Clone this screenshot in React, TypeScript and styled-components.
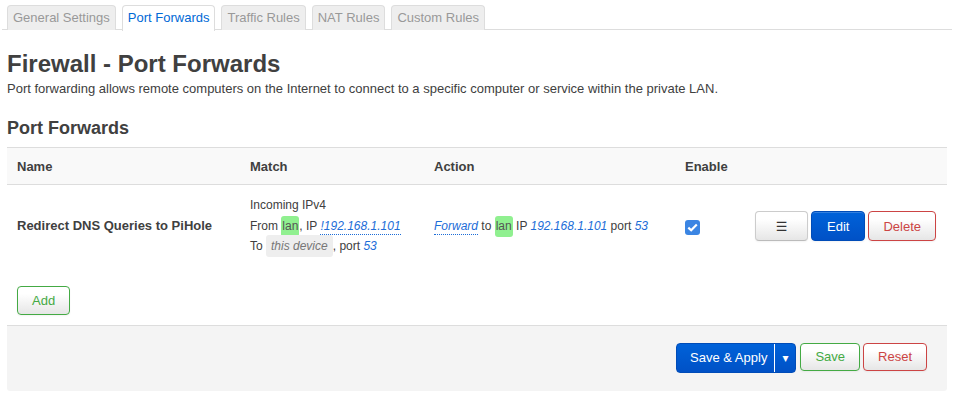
import React from 'react';
import styled, { createGlobalStyle, css } from 'styled-components';

const GlobalStyle = createGlobalStyle`
  html, body {
    margin: 0;
    padding: 0;
    background: #fff;
  }
  body {
    font-family: "Liberation Sans", Arial, Helvetica, sans-serif;
    font-size: 13px;
    color: #404040;
  }
`;

const Page = styled.div`
  width: 950px;
  margin: 5px 0 0 2px;
`;

const TabBar = styled.ul`
  display: flex;
  list-style: none;
  margin: 0;
  padding: 0 0 0 5px;
  border-bottom: 1px solid #ddd;
  height: 24px;
`;

const Tab = styled.li<{ $active?: boolean }>`
  height: 24px;
  line-height: 24px;
  padding: 0 5px;
  margin-right: 6px;
  border: 1px solid #ddd;
  border-bottom: none;
  border-radius: 4px 4px 0 0;
  background: #eee;
  color: #999;
  font-size: 13px;
  ${(p) =>
    p.$active &&
    css`
      background: #fff;
      color: #0069d6;
      height: 25px;
    `}
`;

const Content = styled.div`
  padding: 0 5px;
`;

const Title = styled.h2`
  margin: 19px 0 0;
  font-size: 24px;
  line-height: 30px;
  font-weight: bold;
  color: #404040;
`;

const Description = styled.p`
  margin: 1px 0 0;
  font-size: 13px;
  line-height: 18px;
`;

const SectionTitle = styled.h3`
  margin: 18px 0 0;
  font-size: 18px;
  line-height: 24px;
  font-weight: bold;
  color: #404040;
`;

const Table = styled.table`
  margin-top: 7px;
  width: 940px;
  border-collapse: collapse;
  table-layout: fixed;
`;

const HeadRow = styled.tr`
  background: #f9f9f9;
  border-top: 1px solid #ddd;
  border-bottom: 1px solid #ddd;
  height: 37px;
`;

const HeadCell = styled.th`
  text-align: left;
  font-weight: bold;
  font-size: 13px;
  padding: 0 10px;
`;

const Cell = styled.td<{ $align?: 'left' | 'right'; $small?: boolean }>`
  padding: 10px 10px 8px;
  vertical-align: middle;
  text-align: ${(p) => p.$align || 'left'};
  font-size: ${(p) => (p.$small ? '12px' : '13px')};
  line-height: 20.5px;
`;

const RuleName = styled.strong`
  font-weight: bold;
`;

const Line = styled.div``;

const Zone = styled.span`
  background: #90f090;
  border-radius: 3px;
  padding: 3px 1px 4px;
  color: #555;
`;

const Device = styled.span`
  background: #eee;
  border-radius: 3px;
  padding: 4px 5px;
  color: #777;
  font-style: italic;
`;

const Value = styled.em<{ $dotted?: boolean }>`
  color: #1c6dd8;
  font-style: italic;
  ${(p) =>
    p.$dotted &&
    css`
      border-bottom: 1px dotted #1c6dd8;
      padding-bottom: 1px;
    `}
`;

const Check = styled.span`
  display: inline-flex;
  align-items: center;
  justify-content: center;
  width: 15px;
  height: 15px;
  margin-top: 2px;
  border-radius: 3px;
  background: #3b85e3;
  vertical-align: middle;
`;

const ButtonGroup = styled.div`
  display: flex;
  justify-content: flex-end;
  gap: 3px;
  padding-right: 1px;
  margin-top: 1px;
`;

type Variant = 'neutral' | 'action' | 'positive' | 'negative';

const variantStyles: Record<Variant, ReturnType<typeof css>> = {
  neutral: css`
    color: #333;
    border-color: #ccc #ccc #bbb;
  `,
  action: css`
    color: #fff;
    background: linear-gradient(#0062d9, #0051c6);
    border-color: #004cb8;
    padding: 0 15px;
  `,
  positive: css`
    color: #44aa44;
    border-color: #44aa44;
  `,
  negative: css`
    color: #cc4444;
    border-color: #cc4444;
  `,
};

const Button = styled.button<{ $variant?: Variant; $height?: number; $width?: number }>`
  font-family: "Liberation Sans", Arial, sans-serif;
  font-size: 13px;
  height: ${(p) => p.$height || 30}px;
  ${(p) => p.$width && `width: ${p.$width}px;`}
  padding: 0 14px;
  border: 1px solid #ccc;
  border-radius: 4px;
  background: linear-gradient(#fff, #fff 25%, #e6e6e6);
  box-shadow: inset 0 1px 0 rgba(255, 255, 255, 0.2), 0 1px 2px rgba(0, 0, 0, 0.05);
  cursor: pointer;
  ${(p) => variantStyles[p.$variant || 'neutral']}
`;

const MenuGlyph = styled.span`
  font-family: "DejaVu Sans", sans-serif;
  font-size: 13px;
`;

const AddArea = styled.div`
  padding: 21px 10px 10px;
`;

const Footer = styled.div`
  display: flex;
  justify-content: flex-end;
  gap: 3px;
  background: #f4f4f4;
  border-top: 1px solid #ddd;
  border-radius: 0 0 3px 3px;
  padding: 17px 20px 18px;
`;

const SplitButton = styled.div`
  display: flex;
  height: 28px;
  border: 1px solid #004cb8;
  border-radius: 4px;
  background: linear-gradient(#0062d9, #0051c6);
  overflow: hidden;
  margin-right: 1px;
`;

const SplitMain = styled.span`
  display: flex;
  align-items: center;
  padding: 0 7px 0 13px;
  color: #fff;
  font-size: 13px;
  border-right: 1px solid #fff;
`;

const SplitArrow = styled.span`
  display: flex;
  align-items: center;
  justify-content: center;
  width: 20px;
  color: #fff;
  font-family: "DejaVu Sans", sans-serif;
  font-size: 12px;
`;

const tabs = ['General Settings', 'Port Forwards', 'Traffic Rules', 'NAT Rules', 'Custom Rules'];

export default function App() {
  return (
    <>
      <GlobalStyle />
      <Page>
        <TabBar>
          {tabs.map((t) => (
            <Tab key={t} $active={t === 'Port Forwards'}>
              {t}
            </Tab>
          ))}
        </TabBar>
        <Content>
          <Title>Firewall - Port Forwards</Title>
          <Description>
            Port forwarding allows remote computers on the Internet to connect to a specific computer or service
            within the private LAN.
          </Description>
          <SectionTitle>Port Forwards</SectionTitle>
          <Table>
            <colgroup>
              <col style={{ width: 233 }} />
              <col style={{ width: 184 }} />
              <col style={{ width: 251 }} />
              <col style={{ width: 70 }} />
              <col style={{ width: 202 }} />
            </colgroup>
            <thead>
              <HeadRow>
                <HeadCell>Name</HeadCell>
                <HeadCell>Match</HeadCell>
                <HeadCell>Action</HeadCell>
                <HeadCell>Enable</HeadCell>
                <HeadCell />
              </HeadRow>
            </thead>
            <tbody>
              <tr>
                <Cell>
                  <RuleName>Redirect DNS Queries to PiHole</RuleName>
                </Cell>
                <Cell $small>
                  <Line>Incoming IPv4</Line>
                  <Line>
                    From <Zone>lan</Zone>, IP <Value $dotted>!192.168.1.101</Value>
                  </Line>
                  <Line>
                    To <Device>this device</Device>, port <Value>53</Value>
                  </Line>
                </Cell>
                <Cell $small>
                  <Value $dotted>Forward</Value> to <Zone>lan</Zone> IP <Value>192.168.1.101</Value> port{' '}
                  <Value>53</Value>
                </Cell>
                <Cell>
                  <Check>
                    <svg width="11" height="9" viewBox="0 0 11 9">
                      <path d="M1.3 4.6 L4.2 7.3 L9.8 1.6" fill="none" stroke="#fff" strokeWidth="2.2" />
                    </svg>
                  </Check>
                </Cell>
                <Cell $align="right">
                  <ButtonGroup>
                    <Button $width={54}>
                      <MenuGlyph>☰</MenuGlyph>
                    </Button>
                    <Button $variant="action">Edit</Button>
                    <Button $variant="negative">Delete</Button>
                  </ButtonGroup>
                </Cell>
              </tr>
            </tbody>
          </Table>
          <AddArea>
            <Button $variant="positive" $height={29}>
              Add
            </Button>
          </AddArea>
          <Footer>
            <SplitButton>
              <SplitMain>Save &amp; Apply</SplitMain>
              <SplitArrow>▾</SplitArrow>
            </SplitButton>
            <Button $variant="positive" $height={28}>
              Save
            </Button>
            <Button $variant="negative" $height={28}>
              Reset
            </Button>
          </Footer>
        </Content>
      </Page>
    </>
  );
}
